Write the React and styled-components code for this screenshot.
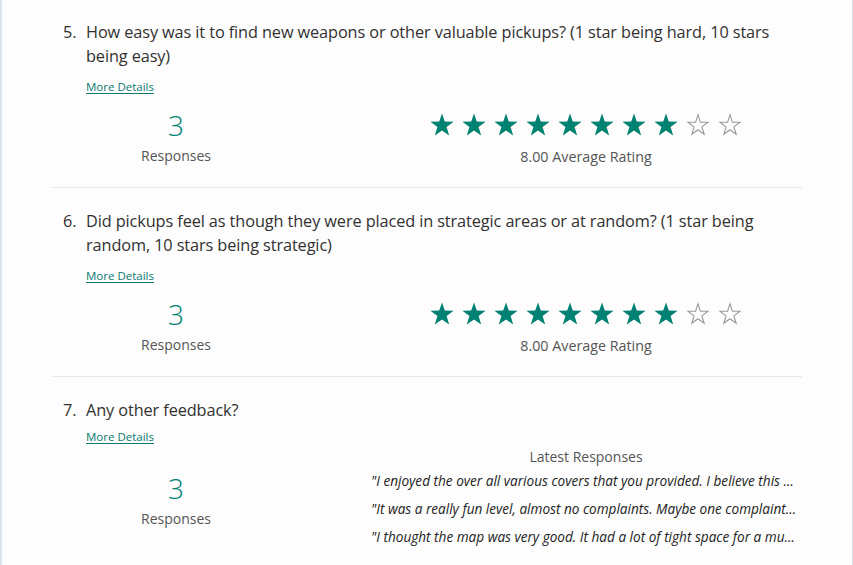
import React from "react";
import styled, { createGlobalStyle } from "styled-components";

const GlobalStyle = createGlobalStyle`
  html, body { margin: 0; padding: 0; background: #fdfdfd; }
  body { font-family: "Open Sans", "Noto Sans", sans-serif; }
`;

const Page = styled.div`
  width: 853px;
  height: 565px;
  box-sizing: border-box;
  border-left: 2px solid #dde5ea;
  border-right: 1px solid #d3dde3;
  background: #fdfdfd;
  overflow: hidden;
`;

const List = styled.div`
  margin-left: 50px;
  width: 750px;
  margin-top: -1px;
`;

const Section = styled.section`
  padding: 21px 0 20px 11px;
  border-bottom: ${(p) => (p.$last ? "none" : "1px solid #e8e8e8")};
`;

const QuestionRow = styled.div`
  display: grid;
  grid-template-columns: 23px 1fr;
  font-size: 16.3px;
  line-height: 24px;
  color: #323130;
  letter-spacing: -0.1px;
`;

const Num = styled.span``;
const QText = styled.span``;

const Body = styled.div`
  padding-left: 23px;
`;

const MoreLink = styled.a`
  display: block;
  width: fit-content;
  margin-top: ${(p) => (p.$tight ? "7px" : "11px")};
  font-size: 11.5px;
  line-height: 16px;
  color: #0b7a70;
  text-decoration: underline;
  text-underline-offset: 2px;
  cursor: pointer;
`;

const Summary = styled.div`
  display: grid;
  grid-template-columns: 180px 432px;
  justify-content: space-between;
  align-items: start;
  margin-top: ${(p) => p.$mt}px;
`;

const CountCol = styled.div`
  display: flex;
  flex-direction: column;
  align-items: center;
  padding-top: ${(p) => p.$pt || 0}px;
`;

const Count = styled.div`
  font-size: 28px;
  line-height: 33px;
  font-weight: 300;
  color: #008272;
`;

const Label = styled.div`
  margin-top: 4px;
  font-size: 14px;
  line-height: 20px;
  color: #555;
`;

const RatingCol = styled.div`
  display: flex;
  flex-direction: column;
  align-items: center;
  padding-top: 4px;
`;

const Stars = styled.div`
  display: flex;
  gap: 8px;
  width: 312px;
`;

const RatingText = styled.div`
  margin-top: 11px;
  font-size: 14.3px;
  line-height: 20px;
  color: #555;
`;

const LatestCol = styled.div`
  display: flex;
  flex-direction: column;
  align-items: stretch;
`;

const LatestTitle = styled.div`
  text-align: center;
  font-size: 14px;
  line-height: 20px;
  color: #555;
  margin-bottom: -4px;
`;

const Quote = styled.div`
  margin-top: 8px;
  padding-left: 1px;
  font-size: 13.6px;
  line-height: 20px;
  font-style: italic;
  color: #222;
  white-space: nowrap;
  overflow: hidden;
  text-overflow: ellipsis;
`;

const STAR = "12,0.5 14.8,8.6 23.6,8.7 16.6,14 19.2,22.6 12,17.4 4.8,22.6 7.4,14 0.4,8.7 9.2,8.6";
const STAR_EMPTY = "12,1.8 14.4,9.2 22,9.3 15.9,13.9 18.2,21.3 12,16.8 5.8,21.3 8.1,13.9 2,9.3 9.6,9.2";

const Star = ({ filled }) => (
  <svg width="24" height="23" viewBox="0 0 24 23">
    {filled ? (
      <polygon points={STAR} fill="#008272" />
    ) : (
      <polygon points={STAR_EMPTY} fill="none" stroke="#9a9a9a" strokeWidth="1.1" strokeLinejoin="miter" />
    )}
  </svg>
);

const StarRating = ({ value }) => (
  <Stars>
    {Array.from({ length: 10 }, (_, i) => (
      <Star key={i} filled={i < value} />
    ))}
  </Stars>
);

const Question = ({ n, text, tight }) => (
  <>
    <QuestionRow>
      <Num>{n}.</Num>
      <QText>{text}</QText>
    </QuestionRow>
    <Body>
      <MoreLink $tight={tight}>More Details</MoreLink>
    </Body>
  </>
);

const RatingSection = ({ n, text }) => (
  <Section>
    <Question n={n} text={text} />
    <Body>
      <Summary $mt={14}>
        <CountCol>
          <Count>3</Count>
          <Label>Responses</Label>
        </CountCol>
        <RatingCol>
          <StarRating value={8} />
          <RatingText>8.00 Average Rating</RatingText>
        </RatingCol>
      </Summary>
    </Body>
  </Section>
);

const quotes = [
  "\"I enjoyed the over all various covers that you provided. I believe this …",
  "\"It was a really fun level, almost no complaints. Maybe one complaint…",
  "\"I thought the map was very good. It had a lot of tight space for a mu…",
];

export default function App() {
  return (
    <>
      <GlobalStyle />
      <Page>
        <List>
          <RatingSection
            n={5}
            text="How easy was it to find new weapons or other valuable pickups? (1 star being hard, 10 stars being easy)"
          />
          <RatingSection
            n={6}
            text="Did pickups feel as though they were placed in strategic areas or at random? (1 star being random, 10 stars being strategic)"
          />
          <Section $last>
            <Question n={7} text="Any other feedback?" tight />
            <Body>
              <Summary $mt={2}>
                <CountCol $pt={25}>
                  <Count>3</Count>
                  <Label>Responses</Label>
                </CountCol>
                <LatestCol>
                  <LatestTitle>Latest Responses</LatestTitle>
                  {quotes.map((q, i) => (
                    <Quote key={i}>{q}</Quote>
                  ))}
                </LatestCol>
              </Summary>
            </Body>
          </Section>
        </List>
      </Page>
    </>
  );
}
